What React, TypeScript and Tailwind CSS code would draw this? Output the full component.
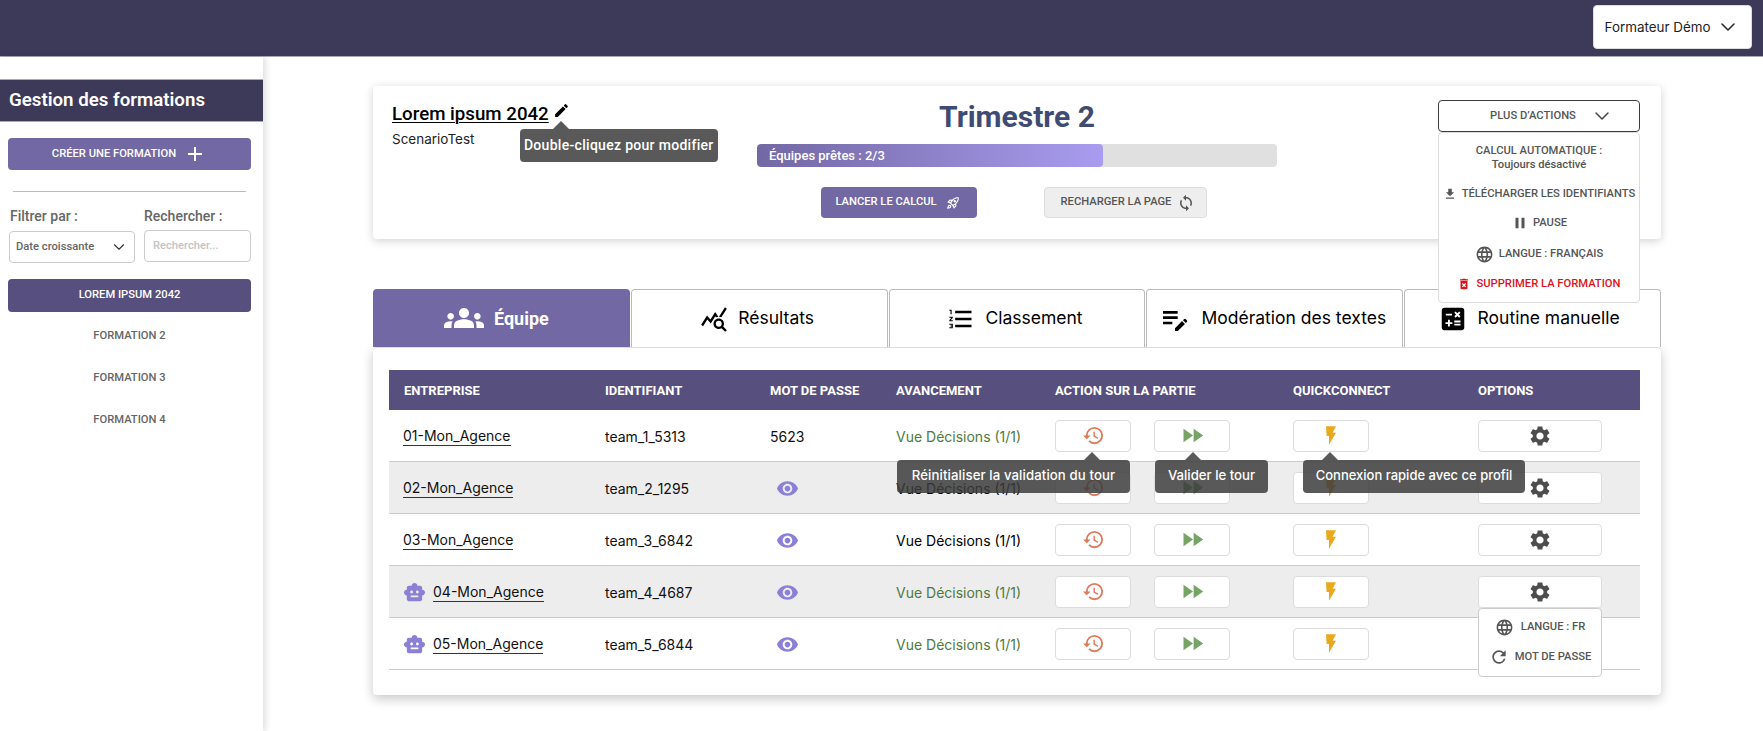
import React from "react";
import { ChevronDown } from "lucide-react";
import {
  MdAdd,
  MdCalculate,
  MdDeleteForever,
  MdEdit,
  MdEditNote,
  MdFastForward,
  MdFileDownload,
  MdFormatListNumbered,
  MdGroups,
  MdHistory,
  MdLanguage,
  MdOutlineRocketLaunch,
  MdPause,
  MdQueryStats,
  MdRefresh,
  MdSettings,
  MdSmartToy,
  MdSync,
  MdVisibility,
} from "react-icons/md";

const teams = [
  { name: "01-Mon_Agence", id: "team_1_5313", pass: "5623", done: true, bot: false },
  { name: "02-Mon_Agence", id: "team_2_1295", pass: "", done: false, bot: false },
  { name: "03-Mon_Agence", id: "team_3_6842", pass: "", done: false, bot: false },
  { name: "04-Mon_Agence", id: "team_4_4687", pass: "", done: true, bot: true },
  { name: "05-Mon_Agence", id: "team_5_6844", pass: "", done: true, bot: true },
];

const columns = "grid grid-cols-[201px_165px_126px_159px_238px_185px_177px]";

const Bolt = () => (
  <svg viewBox="0 0 10 18.5" className="h-[19px] w-[10px] fill-[#eaa91d]">
    <path d="M0 0H10L6.6 6.5H10L3 18.5V9.8H0.6Z" />
  </svg>
);

const Tooltip = ({ text, box, arrow }: { text: string; box: string; arrow: string }) => (
  <div className={`absolute z-20 flex h-[33px] items-center justify-center rounded bg-[#3c3c3c]/85 font-medium whitespace-nowrap text-white ${box}`}>
    <span className={`absolute -top-2 h-0 w-0 border-x-8 border-b-8 border-x-transparent border-b-[#3c3c3c]/85 ${arrow}`} />
    {text}
  </div>
);

const TableButton = ({ className, children }: { className: string; children: React.ReactNode }) => (
  <button className={`relative flex h-8 items-center justify-center rounded border border-[#dcdcdc] bg-white ${className}`}>
    {children}
  </button>
);

const tabs = [
  { label: "Résultats", pad: "pr-[4px]", icon: <MdQueryStats className="h-7 w-7 text-black" /> },
  { label: "Classement", pad: "pr-[4px]", icon: <MdFormatListNumbered className="h-7 w-7 text-black" /> },
  { label: "Modération des textes", pad: "pr-[4px]", icon: <MdEditNote className="h-8 w-8 text-black" /> },
  { label: "Routine manuelle", pad: "pr-[8px]", icon: <MdCalculate className="h-[30px] w-[30px] text-black" /> },
];

const Sidebar = () => (
  <aside className="w-[263px] shrink-0 bg-white pt-[22px] shadow-[3px_0_6px_rgba(0,0,0,0.12)]">
    <h2 className="flex h-[43px] items-center border-y border-[#a9a6bd] bg-[#3d3959] pl-[9px] text-[18.7px] leading-none font-semibold text-white">
      Gestion des formations
    </h2>
    <div className="pr-3 pl-2">
      <button className="mt-4 flex h-8 w-full items-center justify-center gap-[7px] rounded bg-[#7268a3] text-[11.2px] font-medium text-white">
        CRÉER UNE FORMATION
        <MdAdd className="h-6 w-6" />
      </button>
      <div className="mx-[5px] mt-[21px] border-t border-[#bbbbbb]" />
      <div className="mt-4 grid grid-cols-[127px_107px] gap-x-[9px]">
        <div className="pl-[2px] text-[14px] leading-[17px] font-medium text-[#666666]">Filtrer par :</div>
        <div className="text-[14px] leading-[17px] font-medium text-[#666666]">Rechercher :</div>
        <div className="mt-[6px] ml-[1px] flex h-8 items-center justify-between rounded border border-[#cccccc] px-[6px] text-[11.2px] font-medium text-[#666666]">
          Date croissante
          <ChevronDown size={18} strokeWidth={1.5} className="text-[#333333]" />
        </div>
        <div className="mt-[5px] flex h-8 items-center rounded border border-[#cccccc] px-2 text-[11.2px] font-medium text-[#c4c4c4]">
          Rechercher...
        </div>
      </div>
      <div className="mt-4 flex h-[33px] items-center justify-center rounded bg-[#57507e] text-[11.2px] font-medium text-white">
        LOREM IPSUM 2042
      </div>
      <div className="mt-2 flex flex-col gap-[10px]">
        {["FORMATION 2", "FORMATION 3", "FORMATION 4"].map((f) => (
          <div key={f} className="flex h-8 items-center justify-center text-[11.2px] font-medium text-[#666666]">
            {f}
          </div>
        ))}
      </div>
    </div>
  </aside>
);

const MoreActions = () => (
  <div className="relative mt-[14px] w-[202px]">
    <button className="flex h-8 w-full items-center justify-center gap-[14px] rounded border border-[#3d3d3d] bg-white pl-[26px] text-[11.2px] font-medium text-[#555555]">
      PLUS D’ACTIONS
      <ChevronDown size={24} strokeWidth={1.5} className="text-[#444444]" />
    </button>
    <div className="absolute top-[32px] left-0 z-10 flex h-[171px] w-[202px] flex-col items-center rounded border border-[#dddddd] bg-white text-[11.2px] font-medium text-[#555555]">
      <div className="mt-[11px] text-center leading-[14px]">
        CALCUL AUTOMATIQUE :
        <br />
        Toujours désactivé
      </div>
      <div className="mt-[14px] flex h-4 items-center gap-[5px]">
        <MdFileDownload className="h-[14px] w-[14px]" />
        TÉLÉCHARGER LES IDENTIFIANTS
      </div>
      <div className="mt-[13px] flex h-4 items-center gap-[4px]">
        <MdPause className="h-[18px] w-[18px]" />
        PAUSE
      </div>
      <div className="mt-[15px] flex h-4 items-center gap-[5px]">
        <MdLanguage className="h-[19px] w-[19px]" />
        LANGUE : FRANÇAIS
      </div>
      <div className="mt-[14px] flex h-4 items-center gap-[5px] text-[#d9131c]">
        <MdDeleteForever className="h-[14px] w-[14px]" />
        SUPPRIMER LA FORMATION
      </div>
    </div>
  </div>
);

const SummaryCard = () => (
  <section className="flex h-[153px] rounded bg-white pl-[19px] shadow-[0_2px_10px_rgba(0,0,0,0.18)]">
    <div className="relative w-[365px] shrink-0">
      <div className="mt-[14px] flex items-start">
        <h1 className="text-[18.7px] leading-[28px] font-medium text-black underline decoration-1 underline-offset-2">
          Lorem ipsum 2042
        </h1>
        <div className="relative ml-1 pt-[2px]">
          <MdEdit className="h-[17px] w-[17px] text-black" />
          <Tooltip text="Double-cliquez pour modifier" box="top-[29px] left-[-33px] w-[198px] text-[14px] tracking-[0.3px]" arrow="left-[33px]" />
        </div>
      </div>
      <p className="mt-[2px] font-[family-name:Inter] text-[13.5px] leading-[18px] text-[#222222]">ScenarioTest</p>
    </div>
    <div className="w-[520px] shrink-0">
      <div className="mt-[13px] text-center text-[30px] leading-[36px] font-bold text-[#404b74]">Trimestre 2</div>
      <div className="mt-[9px] h-[23px] overflow-hidden rounded bg-[#e0e0e0]">
        <div className="flex h-full w-[346px] items-center rounded bg-gradient-to-r from-[#7268a3] to-[#a99cf0] pl-3 text-[13px] font-medium text-white">
          Équipes prêtes : 2/3
        </div>
      </div>
      <div className="mt-5 flex gap-[67px] pl-[64px]">
        <button className="flex h-[31px] w-[156px] items-center justify-center gap-[9px] rounded bg-[#7268a3] pr-[3px] text-[11.2px] font-medium text-white">
          LANCER LE CALCUL
          <MdOutlineRocketLaunch className="h-[14px] w-[14px]" />
        </button>
        <button className="flex h-[31px] w-[163px] items-center justify-center gap-[6px] rounded border border-[#dddddd] bg-[#eeeeee] pl-[5px] text-[11.2px] font-medium text-[#555555]">
          RECHARGER LA PAGE
          <MdSync className="h-[18px] w-[18px]" />
        </button>
      </div>
    </div>
    <div className="ml-[161px]">
      <MoreActions />
    </div>
  </section>
);

const Tabs = () => (
  <div className="mt-[50px] grid h-[58px] grid-cols-5 gap-[1px]">
    <div className="flex items-center justify-center gap-[10px] rounded-t bg-[#7268a3] pr-[10px] text-[18px] font-bold text-white">
      <MdGroups className="h-[40px] w-[40px]" />
      Équipe
    </div>
    {tabs.map((t) => (
      <div
        key={t.label}
        className={`flex items-center justify-center gap-[10px] rounded-t border-x border-t border-[#bbbbbb] bg-white font-[family-name:Inter] text-[17.5px] text-black ${t.pad}`}
      >
        {t.icon}
        {t.label}
      </div>
    ))}
  </div>
);

const TeamRow = ({ team, index }: { team: (typeof teams)[number]; index: number }) => {
  const first = index === 0;
  return (
    <div className={`${columns} h-[52px] items-center border-b border-[#cccccc] font-[family-name:Inter] text-[14px] text-[#111111] ${index % 2 === 1 ? "bg-[#ededed]" : "bg-white"}`}>
      <div className="flex items-center gap-[7px] pt-px pl-[14px]">
        {team.bot && <MdSmartToy className="h-[23px] w-[23px] text-[#8b80d6]" />}
        <span className="border-b border-[#333333] leading-[18px]">{team.name}</span>
      </div>
      <div className="pt-px pl-[15px]">{team.id}</div>
      <div className="pt-px pl-[15px]">
        {team.pass || <MdVisibility className="ml-[6px] h-[23px] w-[23px] text-[#8b80d6]" />}
      </div>
      <div className={`pt-px pl-[15px] ${team.done ? "text-[#4f7a3d]" : "text-black"}`}>Vue Décisions (1/1)</div>
      <div className="flex gap-[23px] pl-[15px]">
        <TableButton className="w-[76px]">
          <MdHistory className="h-[23px] w-[23px] text-[#dc7b5e]" />
          {first && <Tooltip text="Réinitialiser la validation du tour" box="top-[39px] right-0 w-[233px] text-[13.2px] tracking-[0.1px]" arrow="right-[30px]" />}
        </TableButton>
        <TableButton className="w-[76px]">
          <MdFastForward className="h-[27px] w-[27px] text-[#76a366]" />
          {first && <Tooltip text="Valider le tour" box="top-[39px] left-0 w-[113px] text-[13.2px]" arrow="left-[30px]" />}
        </TableButton>
      </div>
      <div className="pl-[15px]">
        <TableButton className="w-[76px]">
          <Bolt />
          {first && <Tooltip text="Connexion rapide avec ce profil" box="top-[39px] left-[9px] w-[222px] text-[13px]" arrow="left-[19px]" />}
        </TableButton>
      </div>
      <div className="pl-[15px]">
        <TableButton className="w-[124px]">
          <MdSettings className="h-6 w-6 text-[#4d4d4d]" />
          {index === 3 && (
            <div className="absolute top-[31px] left-[-1px] z-10 flex h-[69px] w-[124px] flex-col items-center justify-center gap-[14px] rounded border border-[#cccccc] bg-white font-[family-name:Roboto] text-[11.2px] font-medium text-[#555555]">
              <div className="flex h-4 items-center gap-[7px]">
                <MdLanguage className="h-[19px] w-[19px]" />
                LANGUE : FR
              </div>
              <div className="flex h-4 items-center gap-[6px]">
                <MdRefresh className="h-5 w-5" />
                MOT DE PASSE
              </div>
            </div>
          )}
        </TableButton>
      </div>
    </div>
  );
};

const TeamTable = () => (
  <section className="h-[348px] rounded border-t border-[#dddddd] bg-white pt-[22px] pr-[21px] pl-4 shadow-[0_4px_12px_rgba(0,0,0,0.22)]">
    <div className={`${columns} h-[40px] items-center bg-[#57507e] pt-[2px] text-[13px] font-bold text-white`}>
      {["ENTREPRISE", "IDENTIFIANT", "MOT DE PASSE", "AVANCEMENT", "ACTION SUR LA PARTIE", "QUICKCONNECT", "OPTIONS"].map((h) => (
        <div key={h} className="pl-[15px]">{h}</div>
      ))}
    </div>
    {teams.map((team, i) => (
      <TeamRow key={team.name} team={team} index={i} />
    ))}
  </section>
);

export default function App() {
  return (
    <div className="flex h-[731px] flex-col overflow-hidden bg-white font-[family-name:Roboto]">
      <header className="flex h-[57px] shrink-0 items-start justify-end border-b border-[#a9a6bd] bg-[#3d3959] pt-[5px] pr-[11px]">
        <div className="flex h-[44px] w-[159px] items-center justify-center gap-[6px] rounded-sm border border-[#dddddd] bg-white font-[family-name:Inter] text-[13.4px] text-[#222222]">
          Formateur Démo
          <ChevronDown size={24} strokeWidth={1.5} className="text-[#222222]" />
        </div>
      </header>
      <div className="flex flex-1">
        <Sidebar />
        <main className="ml-[110px] w-[1288px] pt-[29px]">
          <SummaryCard />
          <Tabs />
          <TeamTable />
        </main>
      </div>
    </div>
  );
}
